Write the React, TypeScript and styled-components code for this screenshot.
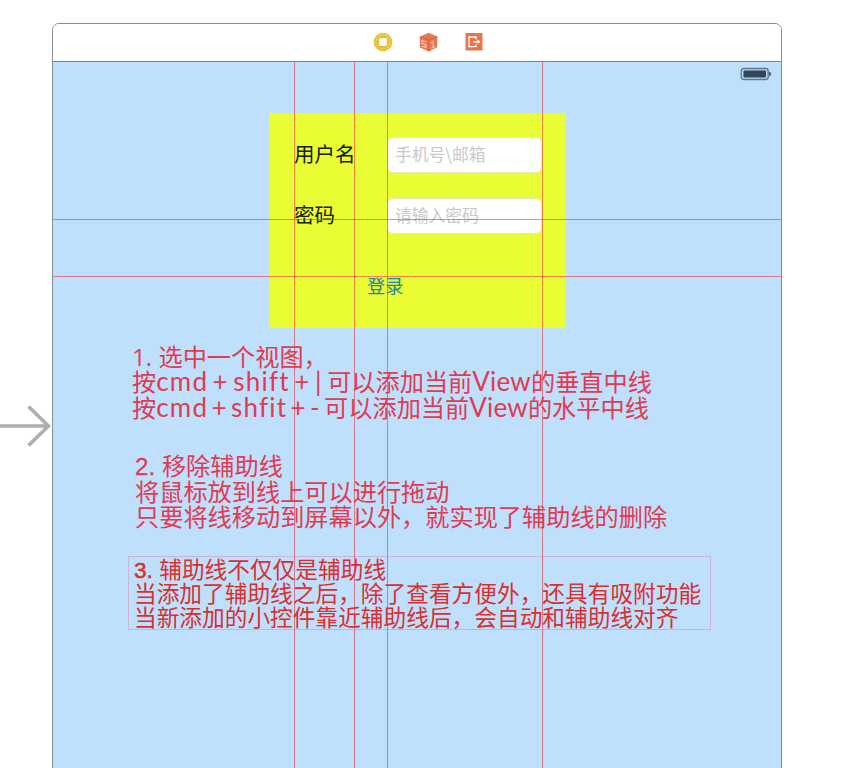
import React from "react";
import styled, { createGlobalStyle } from "styled-components";

const Global = createGlobalStyle`
  * { box-sizing: border-box; }
  body { margin: 0; background: #fff; overflow: hidden; }
`;

const cjk = `"Noto Sans CJK SC", sans-serif`;

const Canvas = styled.main`
  display: flex;
  height: 768px;
  padding-top: 23px;
  overflow: hidden;
  background: #fff;
  font-family: ${cjk};
`;

const EntryPoint = styled.div`
  flex: none;
  width: 52px;
  padding-top: 378px;
  svg { display: block; }
`;

const Scene = styled.section`
  flex: none;
  display: flex;
  flex-direction: column;
  width: 730px;
  height: 760px;
  border: 1px solid #8a8c8e;
  border-radius: 7px;
  overflow: hidden;
`;

const SceneBar = styled.header`
  flex: none;
  display: flex;
  align-items: center;
  gap: 26px;
  height: 38px;
  padding: 0 0 2px 320px;
  border-bottom: 1px solid #73869a;
  background: #fff;
  svg { display: block; }
`;

const Screen = styled.div`
  position: relative;
  flex: 1;
  background: #bee0fd;
`;

const StatusBar = styled.div`
  display: flex;
  justify-content: flex-end;
  height: 51px;
  padding: 5px 9px 0 0;
`;

const LoginCard = styled.form`
  display: flex;
  flex-direction: column;
  width: 297px;
  height: 215px;
  margin-left: 216px;
  padding: 24px 24px 0 25px;
  background: #eafc33;
  box-shadow: 0 0 1px #d5efa0;
`;

const FieldRow = styled.label`
  display: flex;
  align-items: center;
  justify-content: space-between;
  height: 36px;
  margin-bottom: 25px;
  color: #17200d;
  font-size: 20.5px;
`;

const Caption = styled.span`
  padding-bottom: 4px;
`;

const Field = styled.span`
  display: flex;
  align-items: center;
  width: 155px;
  height: 36px;
  padding: 0 8px 2px 7px;
  border: 1px solid #e6eac0;
  border-radius: 6px;
  background: #fff;
  color: #c9c8cd;
  font-size: 16.8px;
  white-space: pre;
`;

const LoginButton = styled.button`
  align-self: flex-start;
  margin: 13px 0 0 73px;
  padding: 0;
  border: 0;
  background: none;
  color: #20869a;
  font-family: ${cjk};
  font-size: 18.2px;
  line-height: 26px;
`;

const Notes = styled.div`
  display: flex;
  flex-direction: column;
  align-items: flex-start;
  padding: 14px 0 0 75px;
`;

const Note = styled.div<{ $size: number; $pitch: number; $color: string; $gap: number; $inset: number; $framed?: boolean }>`
  width: 583px;
  height: ${(p) => p.$pitch * 3 + 2}px;
  margin-bottom: ${(p) => p.$gap}px;
  padding: 0 0 0 ${(p) => p.$inset}px;
  border: 1px solid ${(p) => (p.$framed ? "#ccb3d6" : "transparent")};
  color: ${(p) => p.$color};
  font-size: ${(p) => p.$size}px;
  line-height: ${(p) => p.$pitch}px;
  white-space: pre;
`;

const Line = styled.div`
  height: 1lh;
`;

const Latin = styled.span<{ $space?: number; $track?: number }>`
  font-family: Lato, ${cjk};
  font-size: 26px;
  line-height: 0;
  letter-spacing: ${(p) => p.$track ?? 1.2}px;
  word-spacing: ${(p) => p.$space ?? 0}px;
`;

const Ordinal = styled.span<{ $face: string; $stroke?: number }>`
  font-family: ${(p) => p.$face}, ${cjk};
  -webkit-text-stroke: ${(p) => p.$stroke ?? 0}px currentColor;
  line-height: 0;
`;

const Guide = styled.i<{ $x?: number; $y?: number }>`
  position: absolute;
  left: ${(p) => p.$x ?? 0}px;
  top: ${(p) => p.$y ?? 0}px;
  width: ${(p) => (p.$x === undefined ? "100%" : "1px")};
  height: ${(p) => (p.$y === undefined ? "100%" : "1px")};
  background: rgba(242, 50, 62, 0.6);
  pointer-events: none;
`;

const columns = [241, 301, 334, 489];
const rows = [157, 214];

export default function App() {
  return (
    <Canvas>
      <Global />
      <EntryPoint>
        <svg width="52" height="50" viewBox="0 0 52 50" fill="none" stroke="#aeaeae" strokeWidth="3.6">
          <path d="M0 25H48M28.5 5.5L48.5 25L28.5 44.5" />
        </svg>
      </EntryPoint>
      <Scene>
        <SceneBar>
          <svg width="20" height="20" viewBox="0 0 20 20">
            <circle cx="10" cy="10" r="9.3" fill="#e5c22f" />
            <circle cx="10" cy="10" r="7.2" fill="none" stroke="#f0d76a" strokeWidth=".8" />
            <rect x="5.7" y="5.7" width="8.6" height="8.6" rx="1" fill="#fff" stroke="#c9a51d" strokeWidth=".6" />
          </svg>
          <svg width="19" height="20" viewBox="0 0 19 20">
            <path d="M9.5 .8L18.3 4.6V15.2L9.8 19.4L.8 15.4V4.8Z" fill="#e57950" />
            <path d="M.8 4.8L9.8 8L18.3 4.6M9.8 8V19.4" fill="none" stroke="#d1623d" strokeWidth=".9" />
            <path d="M6.8 9.6L3 8.8V11.3L6.7 12.7V15.4L3 14.2M12 10.8L14.2 9.3V15.3M12.3 16.2L16 14.6" fill="none" stroke="#f7c4b0" strokeWidth="1.2" />
          </svg>
          <svg width="20" height="20" viewBox="0 0 20 20">
            <rect x="1.5" y="1" width="17" height="17.5" fill="#e5764b" />
            <path d="M12 7.2V5H5V14.6H12V12.4" fill="none" stroke="#fff" strokeWidth="1.3" />
            <path d="M8.8 9.8H14" stroke="#fff" strokeWidth="1.3" />
            <path d="M13.4 7.5L16.6 9.8L13.4 12.1Z" fill="#fff" />
          </svg>
        </SceneBar>
        <Screen>
          <StatusBar>
            <svg width="32" height="14" viewBox="0 0 32 14">
              <rect x="1.2" y="1.5" width="27" height="11" rx="2.6" fill="#b3d3ec" stroke="#627889" strokeWidth="1.3" />
              <rect x="3.5" y="3.6" width="22.5" height="6.8" rx=".8" fill="#31465a" />
              <path d="M29 4.6Q31.3 5 31.3 7T29 9.4Z" fill="#56697a" />
            </svg>
          </StatusBar>
          <LoginCard>
            <FieldRow><Caption>用户名</Caption><Field>手机号\邮箱</Field></FieldRow>
            <FieldRow><Caption>密码</Caption><Field>请输入密码</Field></FieldRow>
            <LoginButton type="button">登录</LoginButton>
          </LoginCard>
          <Notes>
            <Note $size={24.2} $pitch={25.4} $color="#e23a50" $gap={31} $inset={3}>
              <Line><Ordinal $face="Open Sans">1. </Ordinal>选中一个视图，</Line>
              <Line>按<Latin $space={-3.4}>cmd + shift + | </Latin>可以添加当前<Latin $track={0.2}>View</Latin>的垂直中线</Line>
              <Line>按<Latin $space={-4.6}>cmd + shfit + - </Latin>可以添加当前<Latin $track={0.2}>View</Latin>的水平中线</Line>
            </Note>
            <Note $size={24.2} $pitch={25.4} $color="#e23a50" $gap={27} $inset={6}>
              <Line><Ordinal $face="Liberation Sans" $stroke={0.3}>2. </Ordinal>移除辅助线</Line>
              <Line>将鼠标放到线上可以进行拖动</Line>
              <Line>只要将线移动到屏幕以外，就实现了辅助线的删除</Line>
            </Note>
            <Note $size={22.7} $pitch={24} $color="#dc2e2d" $gap={0} $inset={5} $framed>
              <Line><Ordinal $face="Liberation Sans" $stroke={0.5}>3. </Ordinal>辅助线不仅仅是辅助线</Line>
              <Line>当添加了辅助线之后，除了查看方便外，还具有吸附功能</Line>
              <Line>当新添加的小控件靠近辅助线后，会自动和辅助线对齐</Line>
            </Note>
          </Notes>
          {columns.map((x) => <Guide key={`x${x}`} $x={x} />)}
          {rows.map((y) => <Guide key={`y${y}`} $y={y} />)}
        </Screen>
      </Scene>
    </Canvas>
  );
}
